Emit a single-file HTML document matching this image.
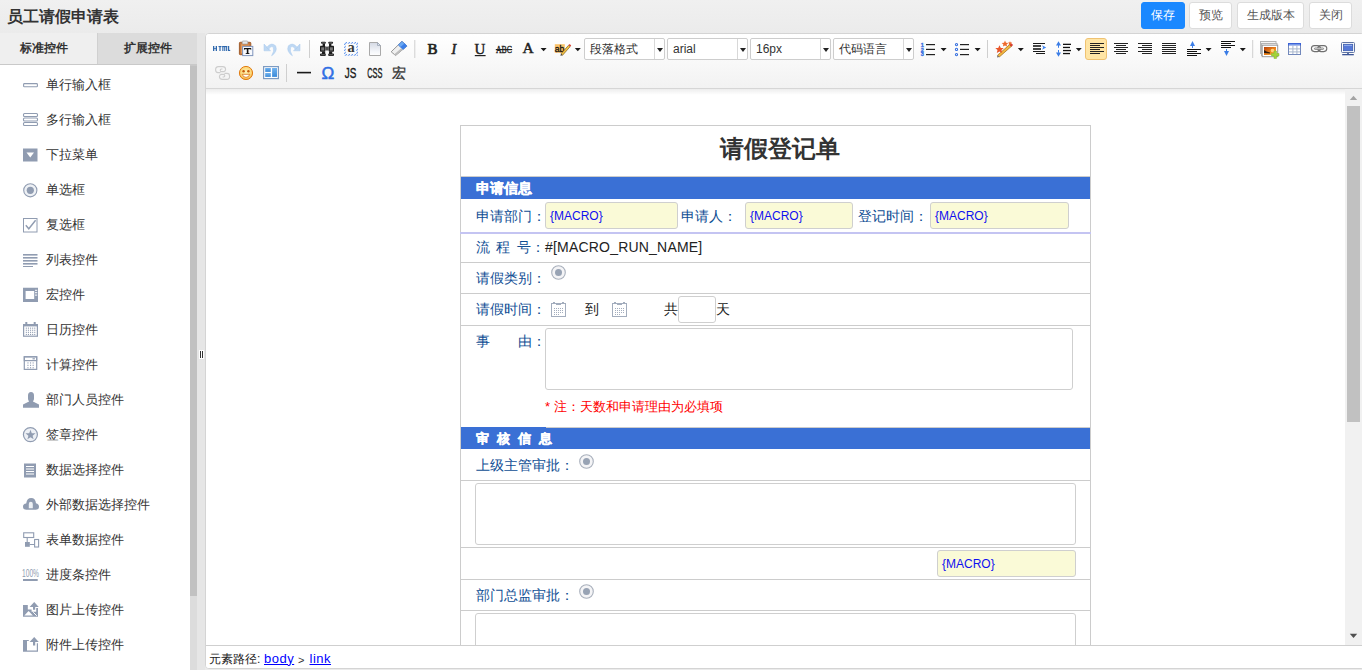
<!DOCTYPE html>
<html><head><meta charset="utf-8">
<style>
*{box-sizing:border-box;margin:0;padding:0}
html,body{width:1362px;height:670px;overflow:hidden}
body{position:relative;background:linear-gradient(#f0f0f0,#ebebeb 33px,#ebebeb);font-family:"Liberation Sans",sans-serif;color:#333}
.a{position:absolute}
.t{position:absolute;white-space:nowrap;line-height:1}
#title{position:absolute;left:7px;top:8px;font-size:16px;font-weight:bold;color:#333;line-height:18px}
.hb{position:absolute;top:2px;height:27px;border:1px solid #dcdcdc;border-radius:3px;background:#fff;font-size:12px;line-height:25px;text-align:center;color:#555}
.tab{position:absolute;top:33px;height:31px;font-size:12px;font-weight:bold;line-height:31px;color:#333;text-align:center}
#side{position:absolute;left:0;top:65px;width:190px;height:605px;background:#fff}
.it{position:absolute;left:0;height:20px;width:190px}
.it .ic{position:absolute;left:23px;top:3px;width:15px;height:15px}
.it .tx{position:absolute;left:46px;top:3px;font-size:13px;line-height:14px;color:#333;white-space:nowrap}
#editor{position:absolute;left:205px;top:33px;width:1160px;height:636px;border:1px solid #d4d4d4;border-radius:4px;background:#fff;overflow:hidden}
#toolbar{position:absolute;left:0;top:0;width:100%;height:55px;background:linear-gradient(#fff,#f2f2f2);border-bottom:1px solid #d6d6d6}
#content{position:absolute;left:0;top:55px;width:1140px;height:556px;background:#fff}
#shadow{position:absolute;left:0;top:55px;width:1140px;height:6px;background:linear-gradient(rgba(0,0,0,.07),rgba(0,0,0,0))}
#vscroll{position:absolute;left:1139px;top:55px;width:17px;height:556px;background:#f1f1f1}
#status{position:absolute;left:0;top:611px;width:100%;height:25px;border-top:1px solid #cfcfcf;background:#fff;font-size:12px}
.ib{position:absolute;width:20px;height:20px}
.sep{position:absolute;width:1px;height:18px;background:#cfcfcf}
.combo{position:absolute;top:4px;height:22px;width:81px;border:1px solid #cdcdcd;border-radius:2px;background:#fff}
.combo .v{position:absolute;left:5px;top:4px;font-size:12px;line-height:13px;color:#333;white-space:nowrap}
.combo .d{position:absolute;right:9px;top:0;width:1px;height:20px;background:#d8d8d8}
.arr{position:absolute;width:0;height:0;border-left:3.5px solid transparent;border-right:3.5px solid transparent;border-top:4px solid #222}
/* form */
.lbl{position:absolute;font-size:14px;line-height:14px;color:#0f4e94;white-space:nowrap}
.hl{position:absolute;left:460px;width:631px;height:1px;background:#cccccc}
.inp{position:absolute;height:27px;border:1px solid #cfcfcf;border-radius:3px;background:#fafad7}
.inp span{position:absolute;left:4px;top:7px;font-size:12px;line-height:13px;color:#1010f0;white-space:nowrap}
.ta{position:absolute;border:1px solid #cfcfcf;border-radius:3px;background:#fff}
.bar{position:absolute;left:461px;width:629px;background:#3a70d5}
.bar span{position:absolute;left:15px;font-size:13px;font-weight:bold;line-height:14px;color:#fff;white-space:nowrap;-webkit-text-stroke:0.35px #fff}
.stx{font-size:13px;line-height:14px;color:#333}
</style></head><body>
<div id="title">员工请假申请表</div>
<div class="hb" style="left:1141px;width:44px;background:#1a88ff;border-color:#1a88ff;color:#fff">保存</div>
<div class="hb" style="left:1189px;width:43px">预览</div>
<div class="hb" style="left:1237px;width:67px">生成版本</div>
<div class="hb" style="left:1309px;width:43px">关闭</div>

<div class="tab" style="left:0;width:97px;background:#efefef;padding-right:9px">标准控件</div>
<div class="tab" style="left:97px;width:100px;background:#dcdcdc;border-left:1px solid #d0d0d0">扩展控件</div>
<div class="a" style="left:0;top:64px;width:197px;height:2px;background:#c9c9c9"></div>

<div id="side"></div>
<svg class="a" style="overflow:visible;left:23px;top:78px" width="16" height="16" viewBox="0 0 16 16"><rect x="0.6" y="5.6" width="13.8" height="3.2" rx="0.8" fill="none" stroke="#909cb1" stroke-width="1.1"/></svg><div class="t stx" style="left:46px;top:78px">单行输入框</div>
<svg class="a" style="overflow:visible;left:23px;top:113px" width="16" height="16" viewBox="0 0 16 16"><rect x="0.5" y="0.5" width="14" height="3" rx="1" fill="none" stroke="#909cb1" stroke-width="1.1"/><rect x="0.5" y="5" width="14" height="3" rx="1" fill="none" stroke="#909cb1" stroke-width="1.1"/><rect x="0.5" y="9.5" width="14" height="3" rx="1" fill="none" stroke="#909cb1" stroke-width="1.1"/></svg><div class="t stx" style="left:46px;top:113px">多行输入框</div>
<svg class="a" style="overflow:visible;left:23px;top:148px" width="16" height="16" viewBox="0 0 16 16"><rect x="0" y="0.5" width="14.5" height="13" fill="#909cb1"/><path d="M3.5 4.5 L11 4.5 L7.25 9.5 Z" fill="#fff"/></svg><div class="t stx" style="left:46px;top:148px">下拉菜单</div>
<svg class="a" style="overflow:visible;left:23px;top:183px" width="16" height="16" viewBox="0 0 16 16"><circle cx="7.3" cy="7.3" r="6.6" fill="#eef1f5" stroke="#909cb1" stroke-width="1.1"/><circle cx="7.3" cy="7.3" r="3.6" fill="#909cb1"/></svg><div class="t stx" style="left:46px;top:183px">单选框</div>
<svg class="a" style="overflow:visible;left:23px;top:218px" width="16" height="16" viewBox="0 0 16 16"><rect x="0.5" y="0.5" width="13.5" height="13.5" fill="none" stroke="#909cb1" stroke-width="1"/><path d="M2.8 7.2 L5.8 10.8 L12.6 2.2" fill="none" stroke="#909cb1" stroke-width="1.4"/></svg><div class="t stx" style="left:46px;top:218px">复选框</div>
<svg class="a" style="overflow:visible;left:23px;top:253px" width="16" height="16" viewBox="0 0 16 16"><rect x="0" y="1" width="14.5" height="1.6" fill="#909cb1"/><rect x="0" y="4" width="14.5" height="1.6" fill="#909cb1"/><rect x="0" y="7" width="14.5" height="1.6" fill="#909cb1"/><rect x="0" y="10" width="14.5" height="1.6" fill="#909cb1"/><rect x="0" y="13" width="10" height="1" fill="#909cb1"/></svg><div class="t stx" style="left:46px;top:253px">列表控件</div>
<svg class="a" style="overflow:visible;left:23px;top:288px" width="16" height="16" viewBox="0 0 16 16"><path d="M0 -0.3 H15 V13.9 H0 Z M2.6 2.9 V11 H11.2 V2.9 Z" fill="#909cb1" fill-rule="evenodd"/><rect x="12" y="1.8" width="2.2" height="1" fill="#fff"/><rect x="12" y="4.2" width="2.2" height="1" fill="#fff"/><rect x="12" y="6.6" width="2.2" height="1" fill="#fff"/></svg><div class="t stx" style="left:46px;top:288px">宏控件</div>
<svg class="a" style="overflow:visible;left:23px;top:323px" width="16" height="16" viewBox="0 0 16 16"><rect x="0.6" y="1.6" width="13.8" height="11.6" fill="none" stroke="#909cb1" stroke-width="1.2"/><rect x="0" y="1" width="15" height="2.4" fill="#909cb1"/><rect x="2.3" y="-1" width="2" height="2.6" fill="#909cb1"/><rect x="10.7" y="-1" width="2" height="2.6" fill="#909cb1"/><rect x="2.8" y="4.6" width="1.1" height="1.1" fill="#909cb1"/><rect x="2.8" y="6.7" width="1.1" height="1.1" fill="#909cb1"/><rect x="2.8" y="8.8" width="1.1" height="1.1" fill="#909cb1"/><rect x="2.8" y="10.9" width="1.1" height="1.1" fill="#909cb1"/><rect x="4.9" y="4.6" width="1.1" height="1.1" fill="#909cb1"/><rect x="4.9" y="6.7" width="1.1" height="1.1" fill="#909cb1"/><rect x="4.9" y="8.8" width="1.1" height="1.1" fill="#909cb1"/><rect x="4.9" y="10.9" width="1.1" height="1.1" fill="#909cb1"/><rect x="7.0" y="4.6" width="1.1" height="1.1" fill="#909cb1"/><rect x="7.0" y="6.7" width="1.1" height="1.1" fill="#909cb1"/><rect x="7.0" y="8.8" width="1.1" height="1.1" fill="#909cb1"/><rect x="7.0" y="10.9" width="1.1" height="1.1" fill="#909cb1"/><rect x="9.1" y="4.6" width="1.1" height="1.1" fill="#909cb1"/><rect x="9.1" y="6.7" width="1.1" height="1.1" fill="#909cb1"/><rect x="9.1" y="8.8" width="1.1" height="1.1" fill="#909cb1"/><rect x="9.1" y="10.9" width="1.1" height="1.1" fill="#909cb1"/><rect x="11.2" y="4.6" width="1.1" height="1.1" fill="#909cb1"/><rect x="11.2" y="6.7" width="1.1" height="1.1" fill="#909cb1"/><rect x="11.2" y="8.8" width="1.1" height="1.1" fill="#909cb1"/><rect x="11.2" y="10.9" width="1.1" height="1.1" fill="#909cb1"/></svg><div class="t stx" style="left:46px;top:323px">日历控件</div>
<svg class="a" style="overflow:visible;left:23px;top:358px" width="16" height="16" viewBox="0 0 16 16"><rect x="1.3" y="-1.2" width="12.4" height="12.6" fill="none" stroke="#909cb1" stroke-width="1.2"/><rect x="1.3" y="-1.2" width="12.4" height="3.8" fill="none" stroke="#909cb1" stroke-width="1.2"/><rect x="9.5" y="0.2" width="2.4" height="1.2" fill="#909cb1"/><rect x="4.4" y="4.4" width="1.1" height="1.1" fill="#909cb1"/><rect x="4.4" y="6.8" width="1.1" height="1.1" fill="#909cb1"/><rect x="4.4" y="9.2" width="1.1" height="1.1" fill="#909cb1"/><rect x="7.0" y="4.4" width="1.1" height="1.1" fill="#909cb1"/><rect x="7.0" y="6.8" width="1.1" height="1.1" fill="#909cb1"/><rect x="7.0" y="9.2" width="1.1" height="1.1" fill="#909cb1"/><rect x="9.6" y="4.4" width="1.1" height="1.1" fill="#909cb1"/><rect x="9.6" y="6.8" width="1.1" height="1.1" fill="#909cb1"/><rect x="9.6" y="9.2" width="1.1" height="1.1" fill="#909cb1"/></svg><div class="t stx" style="left:46px;top:358px">计算控件</div>
<svg class="a" style="overflow:visible;left:23px;top:393px" width="16" height="16" viewBox="0 0 16 16"><path d="M5 2.5 Q5 -1 8 -1 Q11 -1 11 2.5 L11 5.5 Q11 7.5 10 8 L10 8.6 L16 11.4 L16 14.7 L0 14.7 L0 11.4 L6 8.6 L6 8 Q5 7.5 5 5.5 Z" fill="#909cb1"/></svg><div class="t stx" style="left:46px;top:393px">部门人员控件</div>
<svg class="a" style="overflow:visible;left:23px;top:428px" width="16" height="16" viewBox="0 0 16 16"><circle cx="7.4" cy="6.6" r="7" fill="#edf0f5" stroke="#909cb1" stroke-width="1.2"/><path d="M7.50 1.70 L8.79 5.22 L12.54 5.36 L9.59 7.68 L10.62 11.29 L7.50 9.20 L4.38 11.29 L5.41 7.68 L2.46 5.36 L6.21 5.22 Z" fill="#909cb1"/></svg><div class="t stx" style="left:46px;top:428px">签章控件</div>
<svg class="a" style="overflow:visible;left:23px;top:463px" width="16" height="16" viewBox="0 0 16 16"><rect x="1" y="0.5" width="12" height="14" fill="#909cb1"/><rect x="3" y="3" width="8" height="1" fill="#fff"/><rect x="3" y="5.5" width="8" height="1" fill="#fff"/><rect x="3" y="8" width="8" height="1" fill="#fff"/><rect x="3" y="10.5" width="8" height="1" fill="#fff"/></svg><div class="t stx" style="left:46px;top:463px">数据选择控件</div>
<svg class="a" style="overflow:visible;left:23px;top:498px" width="16" height="16" viewBox="0 0 16 16"><path d="M3.2 11.8 Q0 11.8 0 8.6 Q0 5.6 3.2 5.4 Q4 0 8.2 0 Q12.4 0 13 5.2 Q16 5.8 16 8.6 Q16 11.8 12.8 11.8 Z" fill="#909cb1"/><path d="M5.8 10.2 V6 Q5.8 3.8 7.8 3.8 Q9.8 3.8 9.8 6 V10.2 Z" fill="#eef1f5"/></svg><div class="t stx" style="left:46px;top:498px">外部数据选择控件</div>
<svg class="a" style="overflow:visible;left:23px;top:533px" width="16" height="16" viewBox="0 0 16 16"><rect x="0.7" y="-0.2" width="10" height="4.7" fill="none" stroke="#909cb1" stroke-width="1.1"/><path d="M4.2 4.5 V9.5 M6.5 11.5 H11.5" fill="none" stroke="#909cb1" stroke-width="1.1"/><rect x="2" y="9" width="4.8" height="4.8" fill="#909cb1"/><rect x="11.6" y="6.5" width="4" height="7.5" fill="none" stroke="#909cb1" stroke-width="1.1"/></svg><div class="t stx" style="left:46px;top:533px">表单数据控件</div>
<svg class="a" style="overflow:visible;left:23px;top:568px" width="16" height="16" viewBox="0 0 16 16"><text x="-1" y="9" font-family="Liberation Sans" font-size="10.5" fill="#909cb1" textLength="17" lengthAdjust="spacingAndGlyphs">100%</text><rect x="0" y="11" width="14.7" height="2" fill="#909cb1"/></svg><div class="t stx" style="left:46px;top:568px">进度条控件</div>
<svg class="a" style="overflow:visible;left:23px;top:603px" width="16" height="16" viewBox="0 0 16 16"><path d="M0 2 H4.8 V6.5 H8.6 V8.8 H13.2 V5 H15 V13.8 H0 Z" fill="#909cb1"/><path d="M1.3 12.6 L5.6 8 L9.9 12.6 Z" fill="#fff"/><path d="M10.2 9.2 L13.8 12.8" stroke="#fff" stroke-width="1"/><path d="M11.2 -1 L15.8 3.9 H12.2 V6.8 H10 V3.9 H6.6 Z" fill="#909cb1"/></svg><div class="t stx" style="left:46px;top:603px">图片上传控件</div>
<svg class="a" style="overflow:visible;left:23px;top:638px" width="16" height="16" viewBox="0 0 16 16"><path d="M0 2 H5.8 V3 H4 V12.5 H13.8 V5.2 H15 V13.7 H0 Z" fill="#909cb1"/><path d="M11.2 -1 L15.8 3.9 H12.2 V7.4 H10 V3.9 H6.6 Z" fill="#909cb1"/></svg><div class="t stx" style="left:46px;top:638px">附件上传控件</div>
<div class="a" style="left:190px;top:66px;width:7px;height:604px;background:#dcdcdc"></div>
<div class="a" style="left:190px;top:66px;width:7px;height:530px;background:#c1c1c1"></div>
<div class="a" style="left:197px;top:33px;width:8px;height:637px;background:#e6e6e6"></div>

<div id="editor">
 <div id="toolbar"></div>
 <div id="content"></div>
 <div id="shadow"></div>
 <div id="vscroll"></div>
 <div id="status"><div class="t" style="left:3px;top:7px;font-size:12px;line-height:13px;color:#222">元素路径:</div><div class="t" style="left:58px;top:5.5px;font-size:13px;line-height:13px;color:#00f;text-decoration:underline;letter-spacing:0.5px">body</div><div class="t" style="left:92px;top:8px;font-size:11px;line-height:13px;color:#333">&gt;</div><div class="t" style="left:103.5px;top:5.5px;font-size:13px;line-height:13px;color:#00f;text-decoration:underline;letter-spacing:0.5px">link</div></div>
</div>

<div class="a" style="left:1347px;top:106px;width:13px;height:316px;background:#c1c1c1"></div>
<svg class="a" style="left:1345px;top:89px" width="17" height="556"><path d="M4.8 11 L12.2 11 L8.5 6.8 Z" fill="#a3a3a3"/><path d="M4.8 544.8 L12.2 544.8 L8.5 549 Z" fill="#505050"/></svg>
<div class="a" style="left:200px;top:351px;width:1px;height:7px;background:#333;box-shadow:0 0 0 1px #fff"></div>
<div class="a" style="left:202px;top:351px;width:1px;height:7px;background:#333;box-shadow:0 0 0 1px #fff"></div>
<!--TB--><svg class="a" style="left:0;top:0" width="1362" height="90" viewBox="0 0 1362 90"><defs>
<linearGradient id="gPage" x1="0" y1="0" x2="0" y2="1"><stop offset="0" stop-color="#d4d9e4"/><stop offset="0.7" stop-color="#f4f6fa"/><stop offset="1" stop-color="#fff"/></linearGradient>
<linearGradient id="gSm" x1="0" y1="0" x2="0" y2="1"><stop offset="0" stop-color="#ffd75e"/><stop offset="1" stop-color="#f59a1e"/></linearGradient>
<linearGradient id="gTpl" x1="0" y1="0" x2="0" y2="1"><stop offset="0" stop-color="#73b3ef"/><stop offset="1" stop-color="#3a8ad9"/></linearGradient>
<linearGradient id="gImg" x1="0" y1="0" x2="1" y2="1"><stop offset="0" stop-color="#b8400a"/><stop offset="0.6" stop-color="#f08a1c"/><stop offset="1" stop-color="#f7c560"/></linearGradient>
<linearGradient id="gMon" x1="0" y1="0" x2="0" y2="1"><stop offset="0" stop-color="#5a86d8"/><stop offset="1" stop-color="#3a64bf"/></linearGradient>
</defs><g fill="#2f68ad"><rect x="213" y="46" width="1.3" height="5"/><rect x="215.7" y="46" width="1.3" height="5"/><rect x="214.2" y="48" width="1.6" height="1.1"/><rect x="218.5" y="46" width="3" height="1.1"/><rect x="219.4" y="46" width="1.2" height="5"/><rect x="222.3" y="46" width="4.9" height="1.1"/><rect x="222.3" y="46" width="1.1" height="5"/><rect x="224.2" y="46" width="1.1" height="5"/><rect x="226.1" y="46" width="1.1" height="5"/><rect x="228" y="46" width="1.2" height="5"/><rect x="228" y="49.9" width="2.2" height="1.1"/></g><rect x="239.4" y="42.3" width="11.4" height="12.4" rx="0.8" fill="#c8773a" stroke="#9a5522" stroke-width="0.9"/><rect x="241" y="44.2" width="8.2" height="9" fill="#d98c4c"/><rect x="241.6" y="44.4" width="0.8" height="9" fill="#eab37e"/><rect x="242.2" y="41" width="5.6" height="3" rx="0.8" fill="#e6e6e6" stroke="#a0a0a0" stroke-width="0.7"/><rect x="242.6" y="46.4" width="10.2" height="9.2" fill="#f7f9fd" stroke="#7f95bc" stroke-width="1"/><path d="M244 48 H251.2 V50.2 L250.4 49.3 H248.4 V53 L249.6 53.4 V54 H245.6 V53.4 L246.8 53 V49.3 H244.8 L244 50.2 Z" fill="#111"/><g fill="#bed8f3" stroke="#a9c9ec" stroke-width="0.5"><path d="M264 44 L264 50.8 L270.5 50.8 Z"/><path d="M266.6 47.6 Q271 41.6 275.6 45.8 Q278 51.5 271.6 55.8 Q274.6 50.8 273.4 47.8 Q271.2 44.8 268.6 49.4 Z"/><path d="M 300.00 44.00 L 300.00 50.80 L 293.50 50.80 Z"/><path d="M 297.40 47.60 Q 293.00 41.60 288.40 45.80 Q 286.00 51.50 292.40 55.80 Q 289.40 50.80 290.60 47.80 Q 292.80 44.80 295.40 49.40 Z"/></g><rect x="309" y="40" width="1" height="18" fill="#cfcfcf"/><g fill="#1e1e1e"><rect x="321" y="41.8" width="4.9" height="2" rx="1"/><rect x="328.2" y="41.8" width="4.9" height="2" rx="1"/><rect x="322.6" y="43.5" width="2.4" height="3"/><rect x="329" y="43.5" width="2.4" height="3"/><rect x="320" y="45.8" width="5.3" height="6" rx="0.8"/><rect x="328.7" y="45.8" width="5.3" height="6" rx="0.8"/><rect x="322" y="51.5" width="3.2" height="2.5"/><rect x="329" y="51.5" width="3.2" height="2.5"/><rect x="320" y="53.6" width="5.8" height="2.3" rx="1"/><rect x="328.2" y="53.6" width="5.8" height="2.3" rx="1"/></g><rect x="325.2" y="46.6" width="3.6" height="3.9" fill="#555"/><g fill="#777"><rect x="321.2" y="47.3" width="3" height="3.2"/><rect x="329.9" y="47.3" width="3" height="3.2"/><rect x="321" y="54.4" width="3.8" height="0.8"/><rect x="329.2" y="54.4" width="3.8" height="0.8"/><rect x="322" y="42.5" width="3" height="0.7"/><rect x="329.2" y="42.5" width="3" height="0.7"/></g><defs><pattern id="hatch" width="3" height="3" patternUnits="userSpaceOnUse" x="344" y="42"><path d="M-0.5 3.5 L3.5 -0.5" stroke="#6a9cf0" stroke-width="1.1"/></pattern></defs><path d="M344 42 H358 V55.8 H344 Z M345.8 43.8 V54 H356.2 V43.8 Z" fill="url(#hatch)" fill-rule="evenodd"/><text x="351.1" y="52" text-anchor="middle" font-family="Liberation Serif" font-weight="bold" font-size="14.5" fill="#3a3a3a">a</text><path d="M369.5 42.5 H377.5 L380.5 45.5 V55.5 H369.5 Z" fill="url(#gPage)" stroke="#a9a9a9" stroke-width="1"/><path d="M377.5 42.5 V45.5 H380.5 Z" fill="#dfe6f2" stroke="#9aa4b4" stroke-width="0.8"/><path d="M391.2 51.8 L402 41.3 L406.8 46.1 L395.6 55.5 Z" fill="#f0f0f0" stroke="#8a8a8a" stroke-width="0.9" stroke-linejoin="round"/><path d="M398.3 45 L402 41.3 L406.8 46.1 L403 49.4 Z" fill="#6aa8f4" stroke="#4a7fd0" stroke-width="0.8" stroke-linejoin="round"/><path d="M400.6 47.1 L404.8 43.2 L406.8 46.1 L403 49.4 Z" fill="#3b7ee8"/><path d="M395.6 55.5 L403 49.4 L401 48.5 L394 54.5 Z" fill="#bdbdbd"/><rect x="414.3" y="40" width="1" height="18" fill="#cfcfcf"/><text x="427.6" y="53.6" font-family="Liberation Serif" font-size="14" fill="#222" stroke="#222" stroke-width="0.7" textLength="10" lengthAdjust="spacingAndGlyphs">B</text><text x="451.4" y="53.6" font-family="Liberation Serif" font-style="italic" font-size="14" fill="#222" stroke="#222" stroke-width="0.55">I</text><text x="474.6" y="53.6" font-family="Liberation Serif" font-size="14" fill="#222" stroke="#222" stroke-width="0.4" textLength="10.8" lengthAdjust="spacingAndGlyphs">U</text><rect x="474.8" y="55" width="10.8" height="1.2" fill="#222"/><text x="496" y="52.6" font-family="Liberation Serif" font-size="10.5" fill="#222" stroke="#222" stroke-width="0.35" textLength="16" lengthAdjust="spacingAndGlyphs">ABC</text><rect x="495.8" y="49" width="16.4" height="1.2" fill="#222"/><text x="522.4" y="52.6" font-family="Liberation Serif" font-size="15.5" fill="#222" stroke="#222" stroke-width="0.45">A</text><path d="M540.6 48 h6 l-3 3.2 z" fill="#1a1a1a"/><rect x="554.8" y="44.2" width="10" height="8.6" fill="#f9c26a"/><text x="554.8" y="51.8" font-family="Liberation Sans" font-size="9.5" fill="#111" stroke="#111" stroke-width="0.3" textLength="9.6" lengthAdjust="spacingAndGlyphs">ab</text><path d="M561 53.8 L568.6 45.2 L570.2 46.6 L562.6 55.2 Z" fill="#f3c244" stroke="#6a4a10" stroke-width="0.6"/><path d="M568.6 45.2 L569.6 44.1 L571.2 45.5 L570.2 46.6 Z" fill="#e0392b"/><path d="M561 53.8 L562.6 55.2 L560.4 55.8 Z" fill="#333"/><path d="M574.8 48 h6 l-3 3.2 z" fill="#1a1a1a"/><g font-family="Liberation Sans" font-weight="bold" font-size="5.6" fill="#3a72e0" stroke="#3a72e0" stroke-width="0.35"><text x="920.8" y="46.6">1</text><text x="920.8" y="51.6">2</text><text x="920.8" y="56.4">3</text></g><rect x="926" y="44" width="9" height="1.2" fill="#222"/><rect x="926" y="48.8" width="9" height="1.2" fill="#222"/><rect x="926" y="54" width="9" height="1.2" fill="#222"/><path d="M940.6 48 h6 l-3 3.2 z" fill="#1a1a1a"/><g fill="none" stroke="#3a72e0" stroke-width="1.1"><circle cx="956.5" cy="44.6" r="1.1"/><circle cx="956.5" cy="49.4" r="1.1"/><circle cx="956.5" cy="54.6" r="1.1"/></g><rect x="960" y="44" width="9" height="1.2" fill="#222"/><rect x="960" y="48.8" width="9" height="1.2" fill="#222"/><rect x="960" y="54" width="9" height="1.2" fill="#222"/><path d="M974.6 48 h6 l-3 3.2 z" fill="#1a1a1a"/><rect x="987" y="40" width="1" height="18" fill="#cfcfcf"/><path d="M997.6 55.2 L1009.6 44.6 L1011.3 46.4 L999.3 57 Z" fill="#f3b941" stroke="#9c6a1a" stroke-width="0.7"/><path d="M1009.6 44.6 L1011 43.3 L1012.8 45.1 L1011.3 46.4 Z" fill="#e23a2e" stroke="#a52018" stroke-width="0.4"/><path d="M997.6 55.2 L999.3 57 L997 57.5 Z" fill="#666"/><path d="M999.5 45.2 L1000.8 47.9 L1003.7 48.1 L1001.5 50 L1002.2 52.9 L999.5 51.4 L996.8 52.9 L997.5 50 L995.3 48.1 L998.2 47.9 Z" fill="#e8562a"/><path d="M1005 40.6 L1006 42.7 L1008.3 42.9 L1006.6 44.4 L1007.1 46.6 L1005 45.4 L1002.9 46.6 L1003.4 44.4 L1001.7 42.9 L1004 42.7 Z" fill="#ee6a2c"/><path d="M1010 41.2 L1010.7 42.5 L1012.1 42.6 L1011 43.5 L1011.3 44.9 L1010 44.1 L1008.7 44.9 L1009 43.5 L1007.9 42.6 L1009.3 42.5 Z" fill="#ee6a2c"/><path d="M1017.8 48 h6 l-3 3.2 z" fill="#1a1a1a"/><g fill="#1a1a1a"><rect x="1033" y="43" width="12" height="1"/><rect x="1033" y="45.2" width="8" height="1.6"/><rect x="1033" y="48.2" width="8" height="1.6"/><rect x="1033" y="51" width="12" height="1"/><rect x="1036" y="53" width="9" height="1"/></g><path d="M1042 45.2 L1046.2 47.5 L1042 49.8 L1043.2 47.5 Z" fill="#3b82f0"/><path d="M1058.5 41.2 L1061 45.6 H1056 Z M1058.5 56.8 L1061 52.4 H1056 Z" fill="#3b7de6"/><rect x="1058" y="45" width="1" height="2.8" fill="#3b7de6"/><rect x="1058" y="50" width="1" height="2.8" fill="#3b7de6"/><g fill="#111"><rect x="1063" y="43.7" width="8" height="1.3"/><rect x="1063" y="46.8" width="7" height="1.3"/><rect x="1063" y="49.9" width="8" height="1.3"/><rect x="1063" y="52.9" width="7" height="1.3"/></g><path d="M1075.8 48 h6 l-3 3.2 z" fill="#1a1a1a"/><rect x="1085.5" y="38.5" width="21" height="21" rx="2.5" fill="#ffe5a5" stroke="#efc272" stroke-width="1"/><rect x="1090" y="43" width="14" height="1" fill="#222"/><rect x="1090" y="45" width="10" height="1" fill="#222"/><rect x="1090" y="47" width="14" height="1" fill="#222"/><rect x="1090" y="49" width="10" height="1" fill="#222"/><rect x="1090" y="51" width="14" height="1" fill="#222"/><rect x="1090" y="53" width="10" height="1" fill="#222"/><rect x="1114.0" y="43" width="14" height="1" fill="#222"/><rect x="1116.0" y="45" width="10" height="1" fill="#222"/><rect x="1114.0" y="47" width="14" height="1" fill="#222"/><rect x="1116.0" y="49" width="10" height="1" fill="#222"/><rect x="1114.0" y="51" width="14" height="1" fill="#222"/><rect x="1116.0" y="53" width="10" height="1" fill="#222"/><rect x="1138" y="43" width="14" height="1" fill="#222"/><rect x="1142" y="45" width="10" height="1" fill="#222"/><rect x="1138" y="47" width="14" height="1" fill="#222"/><rect x="1142" y="49" width="10" height="1" fill="#222"/><rect x="1138" y="51" width="14" height="1" fill="#222"/><rect x="1142" y="53" width="10" height="1" fill="#222"/><rect x="1162" y="43" width="14" height="1" fill="#222"/><rect x="1162" y="45" width="14" height="1" fill="#222"/><rect x="1162" y="47" width="14" height="1" fill="#222"/><rect x="1162" y="49" width="14" height="1" fill="#222"/><rect x="1162" y="51" width="14" height="1" fill="#222"/><rect x="1162" y="53" width="14" height="1" fill="#222"/><path d="M1192.5 41 L1195 46 H1190 Z" fill="#3b7de6"/><rect x="1192" y="45" width="1" height="3" fill="#3b7de6"/><rect x="1187" y="49" width="14" height="1" fill="#111"/><rect x="1187" y="51" width="10" height="1" fill="#111"/><rect x="1187" y="53" width="14" height="1" fill="#111"/><rect x="1187" y="55" width="10" height="1" fill="#111"/><path d="M1205.6 48 h6 l-3 3.2 z" fill="#1a1a1a"/><rect x="1221" y="41" width="14" height="1" fill="#111"/><rect x="1221" y="43" width="10" height="1" fill="#111"/><rect x="1221" y="45" width="14" height="1" fill="#111"/><rect x="1221" y="47" width="10" height="1" fill="#111"/><path d="M1226.5 56 L1229 51 H1224 Z" fill="#3b7de6"/><rect x="1226" y="49" width="1" height="3" fill="#3b7de6"/><path d="M1239.8 48 h6 l-3 3.2 z" fill="#1a1a1a"/><rect x="1252.2" y="40" width="1" height="18" fill="#cfcfcf"/><rect x="1260.5" y="41.5" width="15.5" height="12" fill="#f4f4f4" stroke="#b5b5b5" stroke-width="1"/><rect x="1261.5" y="43.5" width="15.5" height="12" fill="#f4f4f4" stroke="#b5b5b5" stroke-width="1"/><rect x="1262.2" y="45.2" width="15.5" height="11.5" fill="#fff" stroke="#999" stroke-width="1"/><rect x="1264" y="47" width="12" height="8" fill="url(#gImg)"/><circle cx="1272.5" cy="50.5" r="1.8" fill="#ffd27a"/><path d="M1264 50 Q1265.5 50.5 1266.5 51.5 L1270 52.5 L1270 53.5 L1264 53 Z" fill="#2a1a10"/><path d="M1274 51 h2.5 v2.5 h2.5 v2.5 h-2.5 v2.5 h-2.5 v-2.5 h-2.5 v-2.5 h2.5 z" fill="#a2d23a" stroke="#86b82a" stroke-width="0.5"/><rect x="1288.5" y="43.5" width="12" height="11" fill="#fff" stroke="#7288bb" stroke-width="1"/><rect x="1288" y="43" width="13" height="2.4" fill="#3b62d8"/><rect x="1289" y="44.3" width="11" height="0.8" fill="#8fb0f0"/><g fill="#a9b6cc"><rect x="1292.4" y="45.4" width="1" height="8.6"/><rect x="1296.4" y="45.4" width="1" height="8.6"/><rect x="1289" y="48.4" width="11" height="1"/><rect x="1289" y="51.4" width="11" height="1"/></g><g fill="none" stroke="#6f6f6f" stroke-width="1.1"><rect x="1311.4" y="45.6" width="9" height="6" rx="3"/><rect x="1317.8" y="45.6" width="9" height="6" rx="3"/></g><rect x="1314.4" y="48" width="9.2" height="1.4" rx="0.7" fill="#fff" stroke="#6f6f6f" stroke-width="0.8"/><rect x="1341.5" y="42.5" width="13" height="10" rx="1" fill="#fff" stroke="#5f74a4" stroke-width="1"/><rect x="1343.4" y="44.2" width="9.4" height="6.6" fill="#5578d8" stroke="#2f4f9e" stroke-width="0.6"/><rect x="1344" y="45" width="8" height="0.8" fill="#9ab6f0"/><rect x="1347" y="53" width="2" height="1.2" fill="#5f74a4"/><rect x="1342.2" y="54" width="11.6" height="1.3" fill="#3d5698"/><g fill="none" stroke="#cdcdcd" stroke-width="1.1"><path d="M220.5 72.6 H218 Q215.6 72.6 215.6 69.8 Q215.6 66.6 218.4 66.6 H222.6 Q225.6 66.6 225.6 69.4 Q225.6 71.2 223.8 71.6 H221.6 Q220.2 71.6 220.2 70.2 Q220.2 69 221.4 69 H222.4"/><path d="M224.4 73.4 H227 Q229.6 73.4 229.6 76.2 Q229.6 79.4 226.8 79.4 H222.4 Q219.4 79.4 219.4 76.6 Q219.4 74.8 221.2 74.4 H223.4 Q224.8 74.4 224.8 75.8 Q224.8 77 223.6 77 H222.6"/></g><defs><radialGradient id="gSm2" cx="0.5" cy="0.45" r="0.55"><stop offset="0" stop-color="#fff4b8"/><stop offset="0.7" stop-color="#fbd77a"/><stop offset="1" stop-color="#f2a43a"/></radialGradient></defs><circle cx="246" cy="73" r="6.6" fill="url(#gSm2)" stroke="#e27d12" stroke-width="1"/><circle cx="243.6" cy="71.3" r="1.2" fill="#c85a0c"/><circle cx="248.4" cy="71.3" r="1.2" fill="#c85a0c"/><path d="M242.2 74.3 H249.8 Q248.8 77.4 246 77.4 Q243.2 77.4 242.2 74.3 Z" fill="#fff" stroke="#d9700e" stroke-width="0.8"/><rect x="263.6" y="66.6" width="14.8" height="12" fill="#fff" stroke="#7d9bc2" stroke-width="1.2"/><rect x="265.2" y="68" width="5.6" height="3.9" fill="url(#gTpl)"/><rect x="265.2" y="73" width="5.6" height="3.9" fill="url(#gTpl)"/><rect x="272.1" y="68" width="4.9" height="8.9" fill="url(#gTpl)"/><rect x="286" y="64" width="1" height="18" fill="#cfcfcf"/><rect x="297" y="71.8" width="14" height="1.6" fill="#1a1a1a"/><text x="321.4" y="79.3" font-family="Liberation Sans" font-size="16" fill="#2f6ee4" stroke="#2f6ee4" stroke-width="0.5" textLength="12.8" lengthAdjust="spacingAndGlyphs">Ω</text><text x="344.8" y="77.9" font-family="Liberation Sans" font-size="14" fill="#1a1a1a" stroke="#1a1a1a" stroke-width="0.35" textLength="11.6" lengthAdjust="spacingAndGlyphs">JS</text><text x="367.2" y="77.9" font-family="Liberation Sans" font-size="14" fill="#1a1a1a" stroke="#1a1a1a" stroke-width="0.35" textLength="15.2" lengthAdjust="spacingAndGlyphs">CSS</text><text x="391.6" y="78.4" font-family="Liberation Sans" font-size="14" fill="#333" stroke="#333" stroke-width="0.3">宏</text></svg><div class="combo" style="left:584px;top:38px"><div class="v">段落格式</div><div class="d"></div><div class="arr" style="left:72px;top:9px"></div></div><div class="combo" style="left:667px;top:38px"><div class="v">arial</div><div class="d"></div><div class="arr" style="left:72px;top:9px"></div></div><div class="combo" style="left:750px;top:38px"><div class="v">16px</div><div class="d"></div><div class="arr" style="left:72px;top:9px"></div></div><div class="combo" style="left:833px;top:38px"><div class="v">代码语言</div><div class="d"></div><div class="arr" style="left:72px;top:9px"></div></div><!--/TB-->
<div class="a" style="left:0;top:0;width:1345px;height:645px;overflow:hidden">
<!-- FORM -->
<div class="a" style="left:460px;top:125px;width:631px;height:1px;background:#ccc"></div>
<div class="a" style="left:460px;top:125px;width:1px;height:520px;background:#ccc"></div>
<div class="a" style="left:1090px;top:125px;width:1px;height:520px;background:#ccc"></div>
<div class="t" style="left:720px;top:136px;font-size:24px;line-height:26px;font-weight:bold;color:#333">请假登记单</div>
<div class="hl" style="top:176px"></div><div class="bar" style="top:177px;height:22px"><span style="top:4px;font-size:14px;line-height:15px">申请信息</span></div>
<div class="lbl" style="left:476px;top:209px">申请部门：</div>
<div class="inp" style="left:545px;top:202px;width:133px"><span>{MACRO}</span></div>
<div class="lbl" style="left:681px;top:209px">申请人：</div>
<div class="inp" style="left:745px;top:202px;width:108px"><span>{MACRO}</span></div>
<div class="lbl" style="left:858px;top:209px">登记时间：</div>
<div class="inp" style="left:930px;top:202px;width:139px"><span>{MACRO}</span></div>
<div class="a" style="left:460px;top:232px;width:631px;height:2px;background:#c4c4f2"></div>
<div class="lbl" style="left:476px;top:240px">流</div><div class="lbl" style="left:496px;top:240px">程</div><div class="lbl" style="left:517px;top:240px">号：</div>
<div class="t" style="left:545px;top:239px;font-size:14px;line-height:16px;color:#222;letter-spacing:0.2px">#[MACRO_RUN_NAME]</div>
<div class="hl" style="top:262px"></div>
<div class="lbl" style="left:476px;top:271px">请假类别：</div>
<svg class="a" style="left:551px;top:265px" width="15" height="15"><circle cx="7.5" cy="7.5" r="6.8" fill="#f4f4f6" stroke="#a9b0bc" stroke-width="1.1"/><circle cx="7.5" cy="7.5" r="3.5" fill="#98a3b4"/></svg>
<div class="hl" style="top:293px"></div>
<div class="lbl" style="left:476px;top:302px">请假时间：</div>
<svg class="a" style="left:551px;top:302px" width="16" height="16" viewBox="0 0 16 16"><rect x="0.5" y="1.5" width="14" height="13" fill="#fff" stroke="#a3adbd" stroke-width="1"/><rect x="2" y="0" width="2" height="2" fill="#a3adbd"/><rect x="11" y="0" width="2" height="2" fill="#a3adbd"/><rect x="5" y="1" width="5" height="2" fill="#a3adbd"/><rect x="3" y="6" width="1" height="1" fill="#a3adbd"/><rect x="5" y="6" width="1" height="1" fill="#a3adbd"/><rect x="7" y="6" width="1" height="1" fill="#a3adbd"/><rect x="9" y="6" width="1" height="1" fill="#a3adbd"/><rect x="11" y="6" width="1" height="1" fill="#a3adbd"/><rect x="3" y="8" width="1" height="1" fill="#a3adbd"/><rect x="5" y="8" width="1" height="1" fill="#a3adbd"/><rect x="7" y="8" width="1" height="1" fill="#a3adbd"/><rect x="9" y="8" width="1" height="1" fill="#a3adbd"/><rect x="11" y="8" width="1" height="1" fill="#a3adbd"/><rect x="3" y="10" width="1" height="1" fill="#a3adbd"/><rect x="5" y="10" width="1" height="1" fill="#a3adbd"/><rect x="7" y="10" width="1" height="1" fill="#a3adbd"/><rect x="9" y="10" width="1" height="1" fill="#a3adbd"/><rect x="11" y="10" width="1" height="1" fill="#a3adbd"/><rect x="3" y="12" width="1" height="1" fill="#a3adbd"/><rect x="5" y="12" width="1" height="1" fill="#a3adbd"/><rect x="7" y="12" width="1" height="1" fill="#a3adbd"/></svg>
<div class="t" style="left:585px;top:302px;font-size:14px;line-height:14px;color:#222">到</div>
<svg class="a" style="left:612px;top:302px" width="16" height="16" viewBox="0 0 16 16"><rect x="0.5" y="1.5" width="14" height="13" fill="#fff" stroke="#a3adbd" stroke-width="1"/><rect x="2" y="0" width="2" height="2" fill="#a3adbd"/><rect x="11" y="0" width="2" height="2" fill="#a3adbd"/><rect x="5" y="1" width="5" height="2" fill="#a3adbd"/><rect x="3" y="6" width="1" height="1" fill="#a3adbd"/><rect x="5" y="6" width="1" height="1" fill="#a3adbd"/><rect x="7" y="6" width="1" height="1" fill="#a3adbd"/><rect x="9" y="6" width="1" height="1" fill="#a3adbd"/><rect x="11" y="6" width="1" height="1" fill="#a3adbd"/><rect x="3" y="8" width="1" height="1" fill="#a3adbd"/><rect x="5" y="8" width="1" height="1" fill="#a3adbd"/><rect x="7" y="8" width="1" height="1" fill="#a3adbd"/><rect x="9" y="8" width="1" height="1" fill="#a3adbd"/><rect x="11" y="8" width="1" height="1" fill="#a3adbd"/><rect x="3" y="10" width="1" height="1" fill="#a3adbd"/><rect x="5" y="10" width="1" height="1" fill="#a3adbd"/><rect x="7" y="10" width="1" height="1" fill="#a3adbd"/><rect x="9" y="10" width="1" height="1" fill="#a3adbd"/><rect x="11" y="10" width="1" height="1" fill="#a3adbd"/><rect x="3" y="12" width="1" height="1" fill="#a3adbd"/><rect x="5" y="12" width="1" height="1" fill="#a3adbd"/><rect x="7" y="12" width="1" height="1" fill="#a3adbd"/></svg>
<div class="t" style="left:664px;top:302px;font-size:14px;line-height:14px;color:#222">共</div>
<div class="ta" style="left:678px;top:296px;width:38px;height:27px"></div>
<div class="t" style="left:716px;top:302px;font-size:14px;line-height:14px;color:#222">天</div>
<div class="hl" style="top:325px"></div>
<div class="lbl" style="left:476px;top:334px">事</div>
<div class="lbl" style="left:518px;top:334px">由：</div>
<div class="ta" style="left:545px;top:328px;width:528px;height:62px"></div>
<div class="t" style="left:545px;top:400px;font-size:13px;line-height:14px;color:#f00">* 注：天数和申请理由为必填项</div>
<div class="a" style="left:545px;top:427px;width:546px;height:1px;background:#ccc"></div>
<div class="bar" style="top:427px;height:22px;width:85px"></div>
<div class="bar" style="top:428px;height:21px"><span style="top:4px;letter-spacing:8px">审核信息</span></div>
<div class="lbl" style="left:476px;top:458px">上级主管审批：</div>
<svg class="a" style="left:579px;top:454px" width="15" height="15"><circle cx="7.5" cy="7.5" r="6.8" fill="#f4f4f6" stroke="#a9b0bc" stroke-width="1.1"/><circle cx="7.5" cy="7.5" r="3.5" fill="#98a3b4"/></svg>
<div class="hl" style="top:480px"></div>
<div class="ta" style="left:475px;top:483px;width:601px;height:62px"></div>
<div class="hl" style="top:547px"></div>
<div class="inp" style="left:937px;top:550px;width:139px;height:27px"><span>{MACRO}</span></div>
<div class="hl" style="top:579px"></div>
<div class="lbl" style="left:476px;top:588px">部门总监审批：</div>
<svg class="a" style="left:579px;top:584px" width="15" height="15"><circle cx="7.5" cy="7.5" r="6.8" fill="#f4f4f6" stroke="#a9b0bc" stroke-width="1.1"/><circle cx="7.5" cy="7.5" r="3.5" fill="#98a3b4"/></svg>
<div class="hl" style="top:610px"></div>
<div class="ta" style="left:475px;top:613px;width:601px;height:62px"></div>
</div>
</body></html>
